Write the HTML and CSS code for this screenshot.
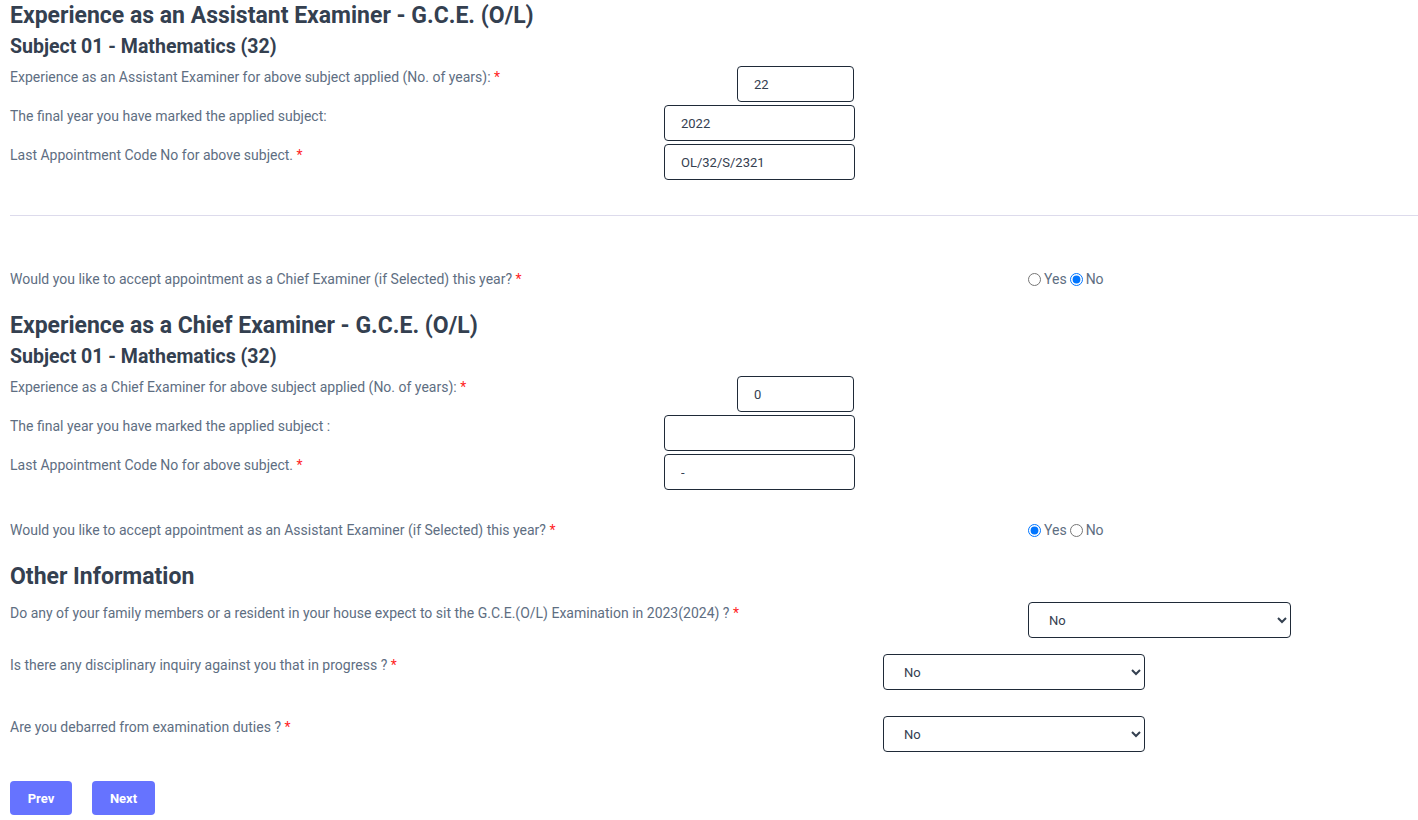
FILE: index.html
```html
<!DOCTYPE html>
<html lang="en">
<head>
<meta charset="utf-8">
<title>Examiner Application</title>
<link rel="stylesheet" href="styles.css">
</head>
<body>
<form class="page">
  <h2 class="title">Experience as an Assistant Examiner - G.C.E. (O/L)</h2>
  <h3 class="sub">Subject 01 - Mathematics (32)</h3>
  <div class="rows">
    <div class="row">
      <label class="lbl lbl-in">Experience as an Assistant Examiner for above subject applied (No. of years): <span class="req">*</span></label>
      <input class="inp inp-short" type="text" value="22">
    </div>
    <div class="row">
      <label class="lbl lbl-in">The final year you have marked the applied subject:</label>
      <input class="inp" type="text" value="2022">
    </div>
    <div class="row">
      <label class="lbl lbl-in">Last Appointment Code No for above subject. <span class="req">*</span></label>
      <input class="inp" type="text" value="OL/32/S/2321">
    </div>
  </div>

  <hr class="divider">

  <div class="radio-row radio-first">
    <label class="lbl lbl-radio">Would you like to accept appointment as a Chief Examiner (if Selected) this year? <span class="req">*</span></label>
    <div class="radios">
      <input type="radio" name="chief" id="chief-yes"><label for="chief-yes" class="opt">Yes</label><input type="radio" name="chief" id="chief-no" checked><label for="chief-no" class="opt">No</label>
    </div>
  </div>

  <h2 class="title">Experience as a Chief Examiner - G.C.E. (O/L)</h2>
  <h3 class="sub">Subject 01 - Mathematics (32)</h3>
  <div class="rows">
    <div class="row">
      <label class="lbl lbl-in">Experience as a Chief Examiner for above subject applied (No. of years): <span class="req">*</span></label>
      <input class="inp inp-short" type="text" value="0">
    </div>
    <div class="row">
      <label class="lbl lbl-in">The final year you have marked the applied subject :</label>
      <input class="inp" type="text" value="">
    </div>
    <div class="row">
      <label class="lbl lbl-in">Last Appointment Code No for above subject. <span class="req">*</span></label>
      <input class="inp" type="text" value="-">
    </div>
  </div>

  <div class="radio-row radio-second">
    <label class="lbl lbl-radio">Would you like to accept appointment as an Assistant Examiner (if Selected) this year? <span class="req">*</span></label>
    <div class="radios">
      <input type="radio" name="asst" id="asst-yes" checked><label for="asst-yes" class="opt">Yes</label><input type="radio" name="asst" id="asst-no"><label for="asst-no" class="opt">No</label>
    </div>
  </div>

  <h2 class="title">Other Information</h2>
  <div class="other">
    <div class="row sel-row sel-row-1">
      <label class="lbl lbl-sel-wide">Do any of your family members or a resident in your house expect to sit the G.C.E.(O/L) Examination in 2023(2024) ? <span class="req">*</span></label>
      <select class="sel sel-wide"><option>No</option><option>Yes</option></select>
    </div>
    <div class="row sel-row sel-row-2">
      <label class="lbl lbl-sel">Is there any disciplinary inquiry against you that in progress ? <span class="req">*</span></label>
      <select class="sel"><option>No</option><option>Yes</option></select>
    </div>
    <div class="row sel-row">
      <label class="lbl lbl-sel">Are you debarred from examination duties ? <span class="req">*</span></label>
      <select class="sel"><option>No</option><option>Yes</option></select>
    </div>
  </div>

  <div class="actions">
    <button type="button" class="btn btn-prev">Prev</button>
    <button type="button" class="btn btn-next">Next</button>
  </div>
</form>
</body>
</html>
```

FILE: styles.css
```css
html, body {
  margin: 0;
  padding: 0;
  background: #fff;
}

body {
  font-family: Roboto, "Liberation Sans", Arial, sans-serif;
  color: #5e6e82;
  width: 1418px;
  height: 820px;
  overflow: hidden;
}

.page {
  padding: 2px 0 0 10px;
}

.title {
  margin: 0;
  font-size: 23px;
  line-height: 28.8px;
  font-weight: 700;
  color: #344050;
}

.sub {
  margin: 4px 0 0;
  font-size: 19.5px;
  line-height: 24px;
  font-weight: 700;
  color: #344050;
}

.rows {
  margin-top: 7px;
  display: flex;
  flex-direction: column;
  gap: 3px;
}

.rows + .radio-row {
  margin-top: 30px;
}

.row {
  display: flex;
  align-items: flex-start;
}

.lbl {
  font-size: 14px;
  line-height: 21px;
  padding-top: 1px;
  color: #5e6e82;
}

.lbl-in {
  flex: 0 0 654px;
}

.req {
  color: #ff1f1f;
}

.inp {
  box-sizing: border-box;
  width: 191px;
  height: 36px;
  border: 1px solid #1f2a38;
  border-radius: 4px;
  padding: 1px 16px 0;
  font-family: Roboto, "Liberation Sans", Arial, sans-serif;
  font-size: 13px;
  color: #344050;
  background: #fff;
  outline: none;
}

.inp-short {
  width: 117px;
  margin-left: 73px;
}

.divider {
  margin: 35px 0 0;
  border: 0;
  border-top: 1px solid #dddbec;
  height: 0;
}

.radio-row {
  display: flex;
  align-items: flex-start;
}

.radio-first {
  margin-top: 53px;
}

.radio-row + .title {
  margin-top: 22px;
}

.lbl-radio {
  flex: 0 0 1018px;
  padding-top: 0;
}

.radios {
  display: flex;
  align-items: center;
  height: 21px;
  font-size: 14px;
  color: #5e6e82;
}

.radios input {
  margin: 0 3px 0 0;
  width: 13px;
  height: 13px;
}

.radios .opt + input {
  margin-left: 3px;
}

.opt {
  line-height: 21px;
}

.other {
  margin-top: 11px;
}

.sel-row-1 {
  margin-bottom: 16px;
}

.sel-row-2 {
  margin-bottom: 26px;
}

.lbl-sel-wide {
  flex: 0 0 1018px;
}

.lbl-sel {
  flex: 0 0 873px;
}

.sel {
  box-sizing: border-box;
  width: 262px;
  height: 36px;
  border: 1px solid #1f2a38;
  border-radius: 4px;
  padding: 1px 12px 0 16px;
  font-family: Roboto, "Liberation Sans", Arial, sans-serif;
  font-size: 13px;
  color: #344050;
  background: #fff;
  outline: none;
}

.sel-wide {
  width: 263px;
}

.actions {
  margin-top: 29px;
  display: flex;
  gap: 20px;
}

.btn {
  height: 34px;
  border: 0;
  border-radius: 4px;
  background: #6673ff;
  color: #fff;
  font-family: Roboto, "Liberation Sans", Arial, sans-serif;
  font-size: 13px;
  font-weight: 700;
  padding: 0;
  cursor: pointer;
}

.btn-prev {
  width: 62px;
}

.btn-next {
  width: 63px;
}
```
